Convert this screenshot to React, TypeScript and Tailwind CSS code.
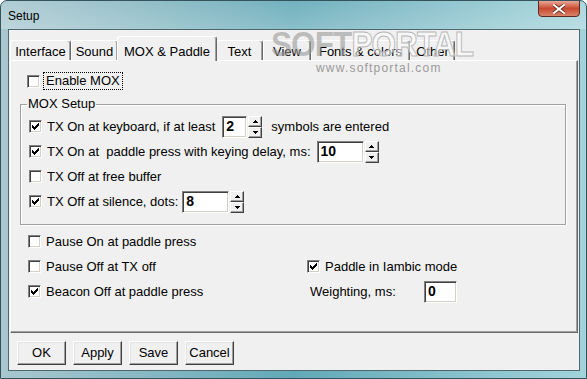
import React from "react";

const font = "font-['Liberation_Sans',Arial,sans-serif]";

// classic 7x7 check mark, drawn pixel by pixel
const CheckMark = () => (
  <svg width="7" height="7" viewBox="0 0 7 7" shapeRendering="crispEdges">
    {[2, 3, 4, 3, 2, 1, 0].map((y, x) => (
      <rect key={x} x={x} y={y} width="1" height="3" fill="#000" />
    ))}
  </svg>
);

const Check = ({ checked }: { checked?: boolean }) => (
  <span className="w-[13px] h-[13px] shrink-0 bg-white border border-white border-t-[#808080] border-l-[#808080] shadow-[inset_1px_1px_0_#404040,inset_-1px_-1px_0_#d4d0c8] flex items-center justify-center">
    {checked && <CheckMark />}
  </span>
);

const Option = ({ label, checked }: { label: string; checked?: boolean }) => (
  <div className="flex items-center gap-[5px] whitespace-pre">
    <Check checked={checked} />
    <span>{label}</span>
  </div>
);

const Arrow = ({ up }: { up?: boolean }) => (
  <div className="h-[11px] bg-[#f0f0f0] border border-white border-r-[#404040] border-b-[#404040] shadow-[inset_-1px_-1px_0_#a0a0a0] flex items-center justify-center">
    <svg width="5" height="3" viewBox="0 0 5 3" shapeRendering="crispEdges">
      {up ? <path d="M2 0h1v1h1v1h1v1H0V2h1V1h1z" fill="#000" /> : <path d="M0 0h5v1H4v1H3v1H2V2H1V1H0z" fill="#000" />}
    </svg>
  </div>
);

const Field = ({ value, width }: { value: string; width: string }) => (
  <div className={`h-[22px] ${width} bg-white border border-white border-t-[#808080] border-l-[#808080] shadow-[inset_1px_1px_0_#404040,inset_-1px_-1px_0_#d4d0c8] pl-[3px] flex items-center font-bold text-[14px]`}>
    {value}
  </div>
);

const Spin = ({ value, width }: { value: string; width: string }) => (
  <div className="flex">
    <Field value={value} width={width} />
    <div className="flex flex-col w-[14px] ml-[1px]">
      <Arrow up />
      <Arrow />
    </div>
  </div>
);

const Button = ({ label }: { label: string }) => (
  <div className="w-[49px] h-[24px] bg-[#f0f0f0] border border-white border-r-[#404040] border-b-[#404040] shadow-[inset_-1px_-1px_0_#a0a0a0,inset_1px_1px_0_#e3e3e3] flex items-center justify-center">
    {label}
  </div>
);

const tabs = [
  { name: "Interface", w: "w-[61px]" },
  { name: "Sound", w: "w-[47px]" },
  { name: "MOX & Paddle", w: "w-[100px]", active: true },
  { name: "Text", w: "w-[47px]" },
  { name: "View", w: "w-[48px]" },
  { name: "Fonts & colors", w: "w-[99px]" },
  { name: "Other", w: "w-[45px]" },
];

export default function App() {
  return (
    <div className={`relative w-[587px] h-[379px] overflow-hidden ${font} text-[13px] text-black bg-gradient-to-r from-[#a9c7cf] via-[#62a9b7] to-[#a3d3db] border border-[#34535c] rounded-t-[7px] flex flex-col`}>
      {/* title bar */}
      <div className="h-[28px] flex items-start justify-between pl-[7px] pr-[6px] bg-gradient-to-b from-white/10 to-white/25">
        <span className="mt-[6px] text-[12px] text-black">Setup</span>
        <div className="w-[42px] h-[17px] -mt-px rounded-b-[4px] border border-[#5b2a20] bg-gradient-to-b from-[#e6a896] via-[#c8492f] to-[#d9826a] flex items-center justify-center">
          <svg width="12" height="10" viewBox="0 0 12 10">
            <path d="M1 1 L11 9 M11 1 L1 9" stroke="#5a2418" strokeWidth="3.4" strokeLinecap="square" />
            <path d="M1 1 L11 9 M11 1 L1 9" stroke="#fff" strokeWidth="2" strokeLinecap="square" />
          </svg>
        </div>
      </div>

      {/* client area */}
      <div className="flex-1 pl-[7px] pr-[6px] pb-[7px] flex">
        <div className="flex-1 bg-[#f0f0f0] border border-[#4d6870] flex flex-col">
          {/* tabs */}
          <div className="flex items-end pt-[5px] pl-[1px] h-[30px]">
            {tabs.map((t) =>
              t.active ? (
                <div key={t.name} className={`${t.w} h-[25px] -mb-px -mx-[1px] relative z-10 bg-[#f0f0f0] border-t border-l border-white border-r border-r-[#696969] shadow-[inset_-1px_0_0_#a0a0a0] rounded-t-[3px] flex items-start justify-center pt-[5px] whitespace-nowrap`}>
                  {t.name}
                </div>
              ) : (
                <div key={t.name} className={`${t.w} h-[20px] bg-[#f0f0f0] border-t border-l border-white border-r border-r-[#696969] shadow-[inset_-1px_0_0_#a0a0a0] rounded-t-[3px] flex items-center justify-center pt-[2px] whitespace-nowrap`}>
                  {t.name}
                </div>
              )
            )}
          </div>

          {/* panel */}
          <div className="ml-[1px] w-[568px] h-[273px] border border-white border-r-[#696969] border-b-[#696969] shadow-[inset_-1px_-1px_0_#a0a0a0] pl-[9px] pr-[11px] pt-[10px]">
            <div className="h-[20px] flex items-center pl-[7px]">
              <Check />
              <span className="ml-[3px] px-[2px] border border-dotted border-black leading-[16px]">Enable MOX</span>
            </div>

            <fieldset className="mt-[5px] border border-[#a0a0a0] shadow-[1px_1px_0_#fff,inset_1px_1px_0_#fff] pt-[2px] pb-[10px]">
              <legend className="ml-[6px] px-[1px] leading-[16px]">MOX Setup</legend>
              <div className="pl-[8px] flex flex-col">
                <div className="h-[25px] flex items-center">
                  <Option label="TX On at keyboard, if at least" checked />
                  <div className="ml-[7px]">
                    <Spin value="2" width="w-[25px]" />
                  </div>
                  <span className="ml-[9px]">symbols are entered</span>
                </div>
                <div className="h-[25px] flex items-center">
                  <Option label="TX On at  paddle press with keying delay, ms:" checked />
                  <div className="ml-[6px]">
                    <Spin value="10" width="w-[47px]" />
                  </div>
                </div>
                <div className="h-[25px] flex items-center">
                  <Option label="TX Off at free buffer" />
                </div>
                <div className="h-[25px] flex items-center">
                  <Option label="TX Off at silence, dots:" checked />
                  <div className="ml-[4px]">
                    <Spin value="8" width="w-[47px]" />
                  </div>
                </div>
              </div>
            </fieldset>

            <div className="mt-[4px] flex">
              <div className="w-[285px] pl-[8px] flex flex-col">
                <div className="h-[25px] flex items-center">
                  <Option label="Pause On at paddle press" />
                </div>
                <div className="h-[25px] flex items-center">
                  <Option label="Pause Off at TX off" />
                </div>
                <div className="h-[25px] flex items-center">
                  <Option label="Beacon Off at paddle press" checked />
                </div>
              </div>
              <div className="flex flex-col pl-[2px]">
                <div className="h-[25px]" />
                <div className="h-[25px] flex items-center">
                  <Option label="Paddle in Iambic mode" checked />
                </div>
                <div className="h-[25px] flex items-center pl-[3px]">
                  <span className="w-[114px]">Weighting, ms:</span>
                  <Field value="0" width="w-[33px]" />
                </div>
              </div>
            </div>
          </div>

          {/* buttons */}
          <div className="mt-[8px] pl-[8px] flex gap-[7px]">
            <Button label="OK" />
            <Button label="Apply" />
            <Button label="Save" />
            <Button label="Cancel" />
          </div>
        </div>
      </div>

      {/* watermark */}
      <div className="absolute left-[270px] top-[25px] pointer-events-none flex flex-col">
        <div className="text-[35px] font-bold leading-[36px] tracking-[-1px] origin-left scale-x-[0.9] whitespace-nowrap">
          <span className="text-[#9a9a9a]/60">SOFT</span>
          <span className="text-white/50 [-webkit-text-stroke:1px_#b8b8b8]">PORTAL</span>
        </div>
        <div className="ml-[45px] text-[12px] leading-[12px] tracking-[1.2px] text-[#9a9a9a]">www.softportal.com</div>
      </div>
    </div>
  );
}
